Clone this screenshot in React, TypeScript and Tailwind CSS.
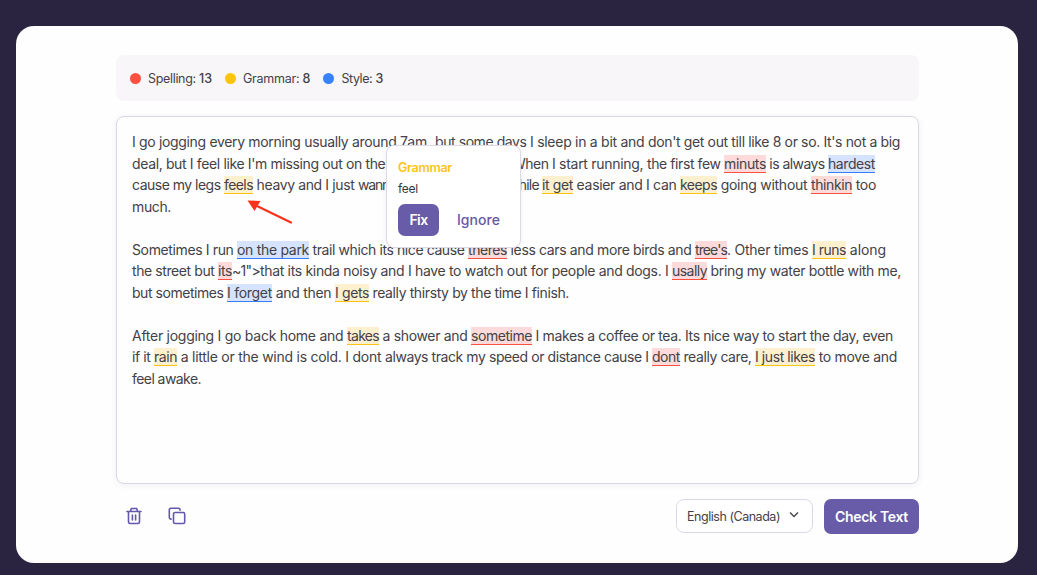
import { useLayoutEffect, useRef, useState } from "react";

type Kind = "text" | "spelling" | "grammar" | "style";
type Segment = [text: string, width: number, kind?: Kind];

const kindClass: Record<Kind, string> = {
  text: "border-b-transparent",
  spelling: "bg-[#fedbda] border-b-[#fb5141]",
  grammar: "bg-[#fdf0cf] border-b-[#fbc411]",
  style: "bg-[#d6e3fe] border-b-[#3580fa]",
};

const lines: Segment[][] = [
  [
    ["I go jogging every morning usually around ", 268],
    ["7am, ", 35],
    ["but some days ", 95],
    ["I sleep in a bit and ", 118],
    ["don't get out till like 8 or so. It's not a big", 252],
  ],
  [
    ["deal, but I feel like I'm missing out on the ", 257],
    [" ", 123],
    ["When ", 40],
    ["I start running, ", 95],
    ["the first few ", 77],
    ["minuts", 42, "spelling"],
    [" is always ", 62],
    ["hardest", 47, "style"],
  ],
  [
    ["cause my legs ", 92],
    ["feels", 29, "grammar"],
    [" heavy and I just ", 105],
    ["wann", 31],
    [" ", 119],
    ["while ", 34],
    ["it get", 31, "grammar"],
    [" easier and I can ", 107],
    ["keeps", 37, "grammar"],
    [" going without ", 94],
    ["thinkin", 41, "spelling"],
    [" too", 24],
  ],
  [["much.", 39]],
  [],
  [
    ["Sometimes I run ", 105],
    ["on the park", 72, "style"],
    [" trail which its nice cause ", 159],
    ["theres", 39, "spelling"],
    [" less cars and more birds and ", 188],
    ["tree's", 32, "spelling"],
    [". Other times ", 85],
    ["I runs", 34, "grammar"],
    [" along", 40],
  ],
  [
    ["the street but ", 86],
    ["its", 14, "spelling"],
    ['~1">', 28],
    ["that its kinda noisy and I ", 155],
    ["have to watch out for people and dogs. I ", 257],
    ["usally", 35, "spelling"],
    [" bring my water bottle with me,", 194],
  ],
  [
    ["but sometimes ", 95],
    ["I forget", 45, "style"],
    [" and then ", 63],
    ["I gets", 34, "grammar"],
    [" really thirsty by the time I finish.", 200],
  ],
  [],
  [
    ["After jogging I go back home and ", 215],
    ["takes", 32, "grammar"],
    [" a shower and ", 92],
    ["sometime", 61, "spelling"],
    [" I makes a coffee or tea. ", 153],
    ["Its nice way to start the day, even", 208],
  ],
  [
    ["if it ", 22],
    ["rain", 23, "grammar"],
    [" a little or the wind is cold. I dont ", 208],
    ["always track my speed or distance cause I ", 267],
    ["dont", 28, "spelling"],
    [" really care, ", 75],
    ["I just likes", 60, "grammar"],
    [" to move and", 82],
  ],
  [["feel awake.", 69]],
];

/** Text tracked so that it fills exactly the given advance width. */
function Fit({ text, width, className = "" }: { text: string; width: number; className?: string }) {
  const ref = useRef<HTMLSpanElement>(null);
  const [spacing, setSpacing] = useState(0);
  useLayoutEffect(() => {
    if (ref.current) {
      setSpacing((width - ref.current.getBoundingClientRect().width) / text.length);
    }
  }, [text, width]);
  return (
    <span className={`block shrink-0 whitespace-pre ${className}`} style={{ width }}>
      <span ref={ref} className="inline-block" style={{ letterSpacing: spacing }}>
        {text}
      </span>
    </span>
  );
}

function Stat({ color, label, width, count }: { color: string; label: string; width: number; count: number }) {
  return (
    <div className="flex items-center">
      <span className={`mr-[7px] size-[11px] rounded-full ${color}`} />
      <Fit text={label} width={width} className="pt-[2px]" />
      <span className="pt-[2px] font-medium">{count}</span>
    </div>
  );
}

function Suggestion() {
  return (
    <div className="absolute left-[269px] top-[28px] h-[103px] w-[135px] rounded-[8px] border border-[#dddae5] bg-white pl-[11px] pt-[12px] shadow-[0_1px_5px_rgba(80,70,130,0.08)]">
      <div className="h-[20px] text-[12.5px] font-semibold leading-[19px] text-[#fcc419]">
        <Fit text="Grammar" width={54} />
      </div>
      <div className="h-[26px] text-[12px] leading-[21px] text-[#38363d]">
        <Fit text="feel" width={20} />
      </div>
      <div className="flex items-center text-[14px] font-semibold leading-[20px]">
        <button className="flex h-[32px] w-[41px] items-center justify-center rounded-[7px] bg-[#685ba7] text-white">
          <Fit text="Fix" width={18} />
        </button>
        <button className="ml-[18px] font-medium text-[#6558a5]">
          <Fit text="Ignore" width={43} />
        </button>
      </div>
    </div>
  );
}

export default function App() {
  return (
    <main className="h-[575px] w-[1037px] overflow-hidden bg-[#2b2441] pl-4 pt-[26px] font-['Inter','Liberation_Sans',sans-serif] text-[#434147]">
      <section className="h-[537px] w-[1002px] rounded-[18px] bg-[#fefefe] pl-[100px] pt-[29px]">
        <header className="flex h-[46px] w-[803px] items-center gap-[13px] rounded-[8px] bg-[#f8f6f8] pl-[14px] text-[12.5px]">
          <Stat color="bg-[#ff5141]" label="Spelling: " width={51} count={13} />
          <Stat color="bg-[#fdc40c]" label="Grammar: " width={59.5} count={8} />
          <Stat color="bg-[#3783ff]" label="Style: " width={34} count={3} />
        </header>

        <div className="relative mt-[15px] h-[368px] w-[803px] rounded-[8px] border border-[#dad8e1] bg-[#fefefe] pl-[15px] pt-[14.5px] text-[14px] shadow-[0_1px_6px_rgba(80,70,130,0.08)]">
          {lines.map((line, i) => (
            <div key={i} className="flex h-[21.5px] items-center">
              {line.map(([text, width, kind = "text"], j) => (
                <Fit
                  key={j}
                  text={text}
                  width={width}
                  className={`h-[18px] border-b leading-[18px] ${kindClass[kind]}`}
                />
              ))}
            </div>
          ))}
          <Suggestion />
          <svg className="absolute left-[129px] top-[82px]" width="48" height="28" viewBox="0 0 48 28">
            <path d="M12 7.5 45 23.5" stroke="#fc321b" strokeWidth="2.2" strokeLinecap="round" />
            <path d="M1.5 1.5 14.5 2 8.5 12Z" fill="#fc321b" />
          </svg>
        </div>

        <footer className="mt-[15px] flex h-[35px] w-[803px] items-start">
          <button className="ml-[9px] mt-[7px]" aria-label="Clear text">
            <svg className="block" width="18" height="20" viewBox="0 0 18 20" fill="none" stroke="#6558ac" strokeWidth="1.6" strokeLinecap="round" strokeLinejoin="round">
              <path d="M2 5.5h14M5.5 5.2 6.3 2.5h5.4l.8 2.7M3.5 5.7v10.2q0 1.6 1.6 1.6h7.8q1.6 0 1.6-1.6V5.7M7.4 9v5M10.6 9v5" />
            </svg>
          </button>
          <button className="ml-[25px] mt-[7px]" aria-label="Copy text">
            <svg className="block" width="18" height="20" viewBox="0 0 18 20" fill="none" stroke="#6558ac" strokeWidth="1.6" strokeLinecap="round" strokeLinejoin="round">
              <rect x="5.5" y="6.5" width="11.2" height="11" rx="1.6" />
              <path d="M12 4.2V3.8q0-1.6-1.6-1.6H2.9Q1.3 2.2 1.3 3.8v7.7q0 1.6 1.6 1.6h.3" />
            </svg>
          </button>
          <button className="ml-auto flex h-[34px] w-[137px] items-center rounded-[8px] border border-[#dcd9e5] bg-white pl-[10px] text-[12.5px]">
            <Fit text="English (Canada)" width={93} className="pt-[2px]" />
            <svg className="mb-[2px] ml-[8px]" width="12" height="8" viewBox="0 0 12 8" fill="none" stroke="#434147" strokeWidth="1.3">
              <path d="m2 1.5 4 4 4-4" />
            </svg>
          </button>
          <button className="ml-[11px] flex h-[35px] w-[95px] items-center justify-center rounded-[7px] bg-[#685ba7] text-[14px] font-semibold text-white">
            <Fit text="Check Text" width={73} />
          </button>
        </footer>
      </section>
    </main>
  );
}
